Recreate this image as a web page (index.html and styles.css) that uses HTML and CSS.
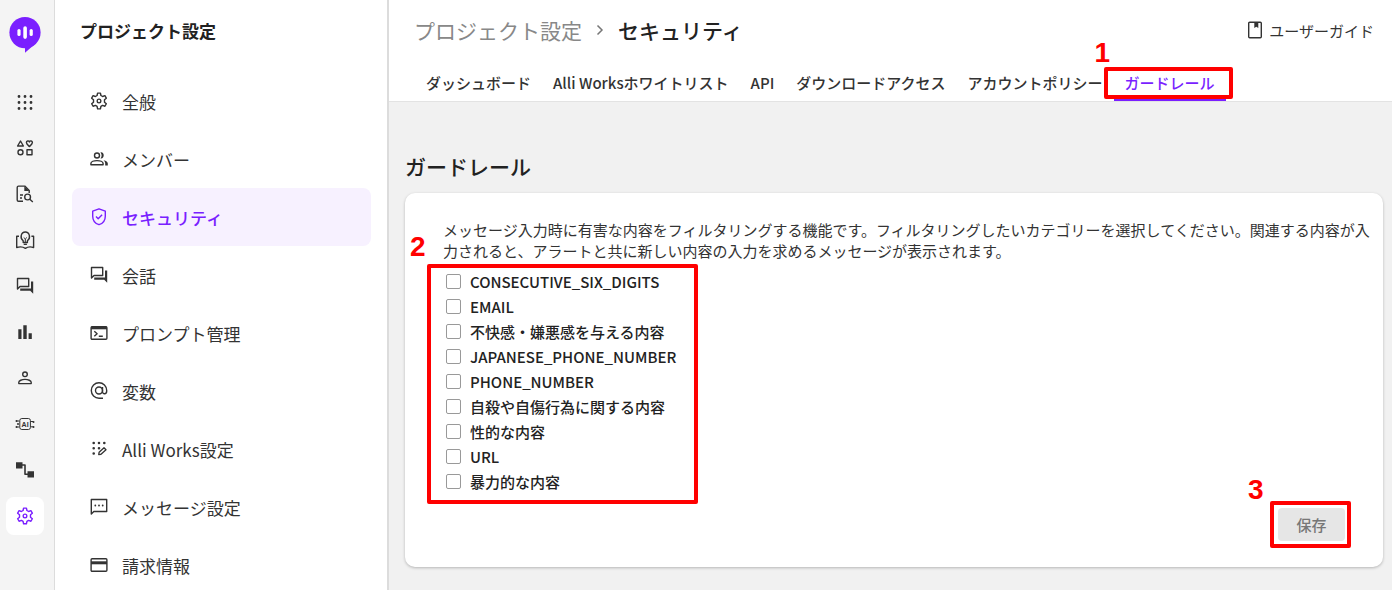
FILE: index.html
```html
<!DOCTYPE html>
<html lang="ja">

<head>
    <meta charset="UTF-8">
    <meta name="viewport" content="width=device-width, initial-scale=1.0">
    <title>セキュリティ - プロジェクト設定</title>
    <link rel="stylesheet" href="styles.css">
</head>

<body>
    <!-- 共通アイコン -->
    <svg class="sprite" aria-hidden="true">
        <symbol id="icon-gear" viewBox="0 0 24 24">
            <path d="M10.3 2.5h3.4l.6 2.9 2 1.2 2.8-1 1.7 3-2.2 1.9v2.9l2.2 1.9-1.7 3-2.8-1-2 1.2-.6 2.9h-3.4l-.6-2.9-2-1.2-2.8 1-1.7-3 2.2-1.9v-2.9L3.2 8.6l1.7-3 2.8 1 2-1.2z" stroke-width="1.7" />
            <circle cx="12" cy="12" r="2.2" stroke-width="1.6" />
        </symbol>
        <symbol id="icon-forum" viewBox="0 0 20 20">
            <path d="M2.5 2.5h11.2v8H5l-2.5 2.6z" />
            <path class="fill" d="M16 5.4h2.2v12.4l-3-3H5.2v-2.2H16z" />
        </symbol>
    </svg>

    <div class="app">
        <!-- 左端のアイコンメニュー -->
        <div class="rail">
            <svg class="logo" viewBox="0 0 32 36" aria-hidden="true">
                <circle cx="16" cy="15.6" r="15.6" fill="#7a1fff" />
                <path d="M16 28v7.8L26 27z" fill="#7a1fff" />
                <g fill="#fff">
                    <rect x="8.4" y="12" width="3.2" height="7" rx="1.6" />
                    <rect x="14.3" y="9.3" width="3.6" height="12.6" rx="1.8" />
                    <rect x="20.6" y="12" width="3.2" height="7" rx="1.6" />
                </g>
            </svg>
            <nav class="rail-nav">
                <button class="rail-btn" aria-label="アプリ">
                    <svg class="icon" viewBox="0 0 20 20">
                        <path d="M4 4.500h.01M10 4.500h.01M16 4.500h.01M4 10.500h.01M10 10.500h.01M16 10.500h.01M4 16.500h.01M10 16.500h.01M16 16.500h.01" stroke-width="2.8" stroke-linecap="round" />
                    </svg>
                </button>
                <button class="rail-btn" aria-label="カテゴリー">
                    <svg class="icon" viewBox="0 0 20 20">
                        <path d="M5.5 3l2.9 5H2.6zM14.4 8.6C12.6 7 11.4 6 11.4 4.6c0-2 2.3-2.2 3-.7.7-1.5 3-1.3 3 .7 0 1.4-1.2 2.4-3 4z" />
                        <circle cx="5.5" cy="14.2" r="2.5" />
                        <rect x="12" y="11.8" width="5" height="5" />
                    </svg>
                </button>
                <button class="rail-btn" aria-label="ドキュメント検索">
                    <svg class="icon" viewBox="0 0 20 20">
                        <path d="M8 17.3H3.5A1.3 1.3 0 0 1 2.2 16V3.4c0-.7.6-1.3 1.3-1.3h6.3l4.4 4.4V9M5 11h3M5 14h2" />
                        <path class="fill" d="M9.3 2.2l4.9 4.9H9.3z" />
                        <circle cx="12.6" cy="13" r="2.9" />
                        <path d="M14.8 15.2l3 2.7" />
                    </svg>
                </button>
                <button class="rail-btn" aria-label="ナレッジ">
                    <svg class="icon" viewBox="0 0 20 20">
                        <path d="M4 6.3H1.7v11.2c3-1 6-1 8.7.8 2.7-1.8 5.3-1.8 8.2-.8V6.3h-2.2M8.2 10.7C4.5 8 6 2 10.3 2s5.8 6 2.1 8.7v1.8H8.2zM8.7 14.4h3.2" />
                        <path d="M8.7 7.5l1.6 1.4 1.6-1.4M10.3 9v3" stroke-width="1" />
                    </svg>
                </button>
                <button class="rail-btn" aria-label="会話">
                    <svg class="icon"><use href="#icon-forum" /></svg>
                </button>
                <button class="rail-btn" aria-label="統計">
                    <svg class="icon" viewBox="0 0 20 20">
                        <path class="fill" d="M3.3 7.3h3.2V17H3.3zM8.3 3.3h3.4V17H8.3zM13.6 11.3h3.2V17h-3.2z" />
                    </svg>
                </button>
                <button class="rail-btn" aria-label="ユーザー">
                    <svg class="icon" viewBox="0 0 20 20">
                        <circle cx="10" cy="6.3" r="2.3" />
                        <path d="M3.8 15.6v-1.3c0-1.6 3-2.9 6.2-2.9s6.2 1.3 6.2 2.9v1.3z" />
                    </svg>
                </button>
                <button class="rail-btn" aria-label="AI">
                    <svg class="icon" viewBox="0 0 20 20">
                        <rect x="4.8" y="4.5" width="10.6" height="11" rx="2" stroke-width="1" />
                        <path d="M1.5 7h3M1.5 13h3M15.5 7.5H18M15.5 12.8h3" stroke-width="1" />
                        <path d="M1.5 7h.01M1.5 13h.01M3 10h.01M18.5 8h.01M18.5 13h.01" stroke-width="2" stroke-linecap="round" />
                        <text class="chip-text" x="10.1" y="12.6" text-anchor="middle">AI</text>
                    </svg>
                </button>
                <button class="rail-btn" aria-label="フロー">
                    <svg class="icon" viewBox="0 0 20 20">
                        <path class="fill" d="M1 2.3h6.5v6.2H1zM12.5 11.2H19v6.4h-6.5z" />
                        <path d="M7 5h3v9.3h3" stroke-width="1.6" />
                    </svg>
                </button>
                <button class="rail-btn active" aria-label="設定">
                    <svg class="icon"><use href="#icon-gear" /></svg>
                </button>
            </nav>
        </div>

        <!-- プロジェクト設定メニュー -->
        <aside class="sidebar">
            <h2 class="sidebar-title">プロジェクト設定</h2>
            <nav class="menu">
                <a class="menu-item" href="#">
                    <svg class="icon"><use href="#icon-gear" /></svg>
                    全般
                </a>
                <a class="menu-item" href="#">
                    <svg class="icon" viewBox="0 0 20 20">
                        <circle cx="8" cy="6.5" r="2.5" />
                        <path d="M1.9 15.8v-1.3c0-1.7 3-2.9 6.1-2.9s6.1 1.2 6.1 2.9v1.3z" />
                        <path class="fill" d="M11.5 3.4c4.3-.8 4.3 6.8 0 6.1 1.5-1.9 1.5-4.2 0-6.1zM14.5 11.2c2.8.5 4.3 1.7 4.3 3.3v1.9h-2.6v-1.9c0-1.3-.6-2.5-1.7-3.3z" />
                    </svg>
                    メンバー
                </a>
                <a class="menu-item active" href="#">
                    <svg class="icon" viewBox="0 0 20 20">
                        <path d="M10 1.8l6.3 2.3v5.1c0 4-2.6 7.3-6.3 8.5-3.7-1.2-6.3-4.5-6.3-8.5V4.1zM7 9.6l2.2 2.2 3.9-4" />
                    </svg>
                    セキュリティ
                </a>
                <a class="menu-item" href="#">
                    <svg class="icon"><use href="#icon-forum" /></svg>
                    会話
                </a>
                <a class="menu-item" href="#">
                    <svg class="icon" viewBox="0 0 20 20">
                        <rect x="2.1" y="3.7" width="15.8" height="12.6" rx="1" />
                        <path class="fill" d="M2 3.5h16v2.8H2z" />
                        <path d="M5.3 8.3l2.8 2.5-2.8 2.5M9.8 13.3h4" />
                    </svg>
                    プロンプト管理
                </a>
                <a class="menu-item" href="#">
                    <svg class="icon" viewBox="0 0 20 20">
                        <circle cx="10" cy="9.5" r="3.5" />
                        <path d="M13.5 6v4.6c0 3.2 4.2 2.9 4.2-.6v-.5a7.7 7.7 0 1 0-7.7 7.7h4" />
                    </svg>
                    変数
                </a>
                <a class="menu-item" href="#">
                    <svg class="icon" viewBox="0 0 20 20">
                        <path d="M4.7 4h.01M10 4h.01M15.3 4h.01M4.7 9.2h.01M10 9.2h.01M4.7 14.5h.01" stroke-width="2.6" stroke-linecap="round" />
                        <path d="M9.7 15.5l.4-2.2L15 8.700l2 2-5 4.600z" stroke-width="1.3" />
                    </svg>
                    Alli Works設定
                </a>
                <a class="menu-item" href="#">
                    <svg class="icon" viewBox="0 0 20 20">
                        <path d="M2.3 2.5h15.4v12H4.8L2.3 17z" />
                        <path d="M6.3 8.5h.01M10 8.5h.01M13.7 8.5h.01" stroke-width="1.8" stroke-linecap="round" />
                    </svg>
                    メッセージ設定
                </a>
                <a class="menu-item" href="#">
                    <svg class="icon" viewBox="0 0 20 20">
                        <rect x="2.1" y="3.7" width="15.8" height="12.6" rx="1" />
                        <path class="fill" d="M2 6.3h16v3H2z" />
                    </svg>
                    請求情報
                </a>
            </nav>
        </aside>

        <main class="main">
            <header class="header">
                <div class="header-top">
                    <h1 class="breadcrumb">
                        <a class="breadcrumb-parent" href="#">プロジェクト設定</a>
                        <svg class="chevron" viewBox="0 0 8 12" aria-hidden="true"><path d="M1.5 1.5L6 6l-4.5 4.5" /></svg>
                        <span>セキュリティ</span>
                    </h1>
                    <a class="guide" href="#">
                        <svg class="icon" viewBox="0 0 20 20">
                            <rect x="3.7" y="2.3" width="12.6" height="15.4" rx="1" />
                            <path class="fill" d="M9.3 2h4v6l-2-1.2-2 1.2z" />
                        </svg>
                        ユーザーガイド
                    </a>
                </div>
                <nav class="tabs">
                    <a class="tab" href="#">ダッシュボード</a>
                    <a class="tab" href="#">Alli Worksホワイトリスト</a>
                    <a class="tab" href="#">API</a>
                    <a class="tab" href="#">ダウンロードアクセス</a>
                    <a class="tab" href="#">アカウントポリシー</a>
                    <a class="tab active" href="#">ガードレール
                        <span class="mark mark-tab"><span class="mark-num">1</span></span>
                    </a>
                </nav>
            </header>

            <section class="content">
                <h2 class="section-title">ガードレール</h2>
                <form class="card">
                    <p class="description">メッセージ入力時に有害な内容をフィルタリングする機能です。フィルタリングしたいカテゴリーを選択してください。関連する内容が入力されると、アラートと共に新しい内容の入力を求めるメッセージが表示されます。</p>
                    <div class="checklist">
                        <label class="check"><input type="checkbox">CONSECUTIVE_SIX_DIGITS</label>
                        <label class="check"><input type="checkbox">EMAIL</label>
                        <label class="check"><input type="checkbox">不快感・嫌悪感を与える内容</label>
                        <label class="check"><input type="checkbox">JAPANESE_PHONE_NUMBER</label>
                        <label class="check"><input type="checkbox">PHONE_NUMBER</label>
                        <label class="check"><input type="checkbox">自殺や自傷行為に関する内容</label>
                        <label class="check"><input type="checkbox">性的な内容</label>
                        <label class="check"><input type="checkbox">URL</label>
                        <label class="check"><input type="checkbox">暴力的な内容</label>
                        <span class="mark mark-list"><span class="mark-num">2</span></span>
                    </div>
                    <div class="actions">
                        <button type="submit" class="save-btn" disabled>保存</button>
                        <span class="mark mark-save"><span class="mark-num">3</span></span>
                    </div>
                </form>
            </section>
        </main>
    </div>
</body>

</html>
```
FILE: styles.css
```css
* {
    box-sizing: border-box;
}

body,
html {
    margin: 0;
    padding: 0;
    height: 100%;
}

body {
    font-family: 'Noto Sans CJK JP', sans-serif;
    font-size: 15px;
    color: #222;
    background-color: #f1f1f1;
    overflow: hidden;
}

a {
    color: inherit;
    text-decoration: none;
}

h1,
h2,
p {
    margin: 0;
}

.app {
    display: flex;
    height: 100vh;
}

/* アイコン */
.sprite {
    position: absolute;
    width: 0;
    height: 0;
}

.icon {
    flex: none;
    width: 20px;
    height: 20px;
    fill: none;
    stroke: currentColor;
    stroke-width: 1.4;
    stroke-linejoin: round;
}

.fill {
    fill: currentColor;
    stroke: none;
}

.chip-text {
    font: bold 7px 'Liberation Sans', sans-serif;
    fill: currentColor;
    stroke: none;
}

/* 左端のアイコンメニュー */
.rail {
    flex: none;
    display: flex;
    flex-direction: column;
    align-items: center;
    width: 55px;
    padding: 17px 5px 0 0;
    background-color: #f4f4f4;
    border-right: 1px solid #dcdcdc;
}

.logo {
    width: 32px;
    height: 36px;
}

.rail-nav {
    display: flex;
    flex-direction: column;
    gap: 8px;
    margin-top: 30px;
}

.rail-btn {
    display: flex;
    align-items: center;
    justify-content: center;
    width: 38px;
    height: 38px;
    padding: 0;
    color: #333;
    background: none;
    border: none;
    border-radius: 8px;
    cursor: pointer;
}

.rail-btn.active {
    color: #7a1fff;
    background-color: #fff;
}

/* プロジェクト設定メニュー */
.sidebar {
    flex: none;
    width: 334px;
    padding: 17px 16px 0 17px;
    background-color: #fff;
    border-right: 2px solid #dcdcdc;
}

.sidebar-title {
    padding-left: 8px;
    font-size: 17px;
    line-height: 28px;
    font-weight: 700;
}

.menu {
    margin-top: 27px;
}

.menu-item {
    display: flex;
    align-items: center;
    gap: 13px;
    height: 58px;
    padding: 0 17px;
    border-radius: 8px;
    font-size: 17px;
    color: #333;
}

.menu-item.active {
    color: #7a1fff;
    background-color: #f7f1ff;
    font-weight: 500;
}

/* ヘッダー */
.main {
    flex: 1;
    min-width: 0;
}

.header {
    background-color: #fff;
    border-bottom: 1px solid #e3e3e3;
}

.header-top {
    display: flex;
    align-items: center;
    justify-content: space-between;
    padding: 16px 18px 0 25px;
}

.breadcrumb {
    display: flex;
    align-items: center;
    gap: 14px;
    font-size: 21px;
    line-height: 28px;
    font-weight: 500;
}

.breadcrumb-parent {
    font-weight: 400;
    color: #888;
}

.chevron {
    width: 8px;
    height: 12px;
    fill: none;
    stroke: #777;
    stroke-width: 1.5;
}

.guide {
    display: flex;
    align-items: center;
    gap: 4px;
    color: #333;
}

.tabs {
    display: flex;
    margin-top: 23px;
    padding-left: 26px;
}

.tab {
    position: relative;
    padding: 0 11px;
    border-bottom: 3px solid transparent;
    line-height: 31px;
    font-weight: 500;
    color: #333;
    white-space: nowrap;
}

.tab.active {
    color: #7a1fff;
    border-bottom-color: #7a1fff;
}

/* ガードレール */
.content {
    padding: 50px 9px 0 16px;
}

.section-title {
    font-size: 21px;
    line-height: 28px;
    font-weight: 500;
}

.card {
    margin-top: 13px;
    padding: 26px 38px;
    background-color: #fff;
    border-radius: 10px;
    box-shadow: 0 1px 3px rgba(0, 0, 0, 0.25);
}

.description {
    margin-right: -30px;
    line-height: 21px;
    color: #333;
}

.checklist {
    position: relative;
    display: flex;
    flex-direction: column;
    align-items: flex-start;
    margin-top: 8px;
}

.check {
    display: flex;
    align-items: center;
    gap: 9px;
    height: 25px;
    font-weight: 500;
}

.check input {
    appearance: none;
    width: 15px;
    height: 15px;
    margin: 0 0 0 3px;
    background-color: #fff;
    border: 1px solid #999;
    border-radius: 2px;
}

.check input:checked {
    background-color: #7a1fff;
}

.actions {
    position: relative;
    display: flex;
    justify-content: flex-end;
    margin-top: 14px;
}

.save-btn {
    width: 67px;
    height: 33px;
    padding: 0;
    font-family: inherit;
    font-size: 15px;
    font-weight: 500;
    color: #777;
    background-color: #e6e6e6;
    border: none;
    border-radius: 4px;
}

/* 手順の赤枠 */
.mark {
    position: absolute;
    border: 4px solid #f00;
    border-radius: 2px;
    pointer-events: none;
}

.mark-num {
    position: absolute;
    color: #f00;
    font: bold 28px/28px 'Liberation Sans', sans-serif;
}

.mark-tab {
    top: 0;
    left: -10px;
    right: -7px;
    height: 32px;
}

.mark-tab .mark-num {
    top: -32px;
    left: -13px;
}

.mark-list {
    top: -5px;
    left: -16px;
    width: 271px;
    height: 240px;
}

.mark-list .mark-num {
    top: -35px;
    left: -21px;
}

.mark-save {
    top: -7px;
    right: -6px;
    width: 81px;
    height: 47px;
}

.mark-save .mark-num {
    top: -29px;
    left: -26px;
}
```
